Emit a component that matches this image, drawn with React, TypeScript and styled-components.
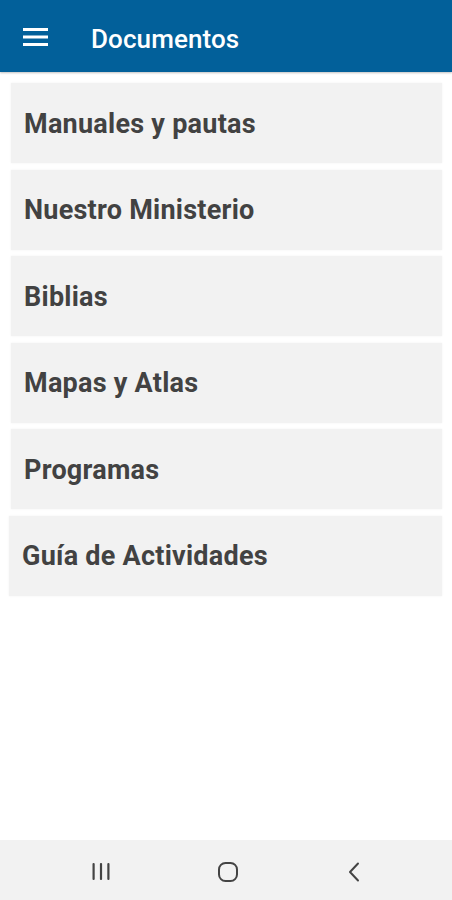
import React from "react";
import styled, { createGlobalStyle } from "styled-components";

const Global = createGlobalStyle`
  html, body { margin: 0; padding: 0; background: #ffffff; }
  body { font-family: Roboto, "Noto Sans", Arial, sans-serif; }
`;

const Screen = styled.div`
  width: 452px;
  height: 900px;
  display: flex;
  flex-direction: column;
  background: #ffffff;
  overflow: hidden;
`;

const AppBar = styled.header`
  height: 72px;
  box-sizing: border-box;
  flex: none;
  background: #02609a;
  display: flex;
  align-items: center;
  padding: 5px 0 0 23px;
  box-shadow: 0 1px 2px rgba(0, 0, 0, 0.25);
  position: relative;
  z-index: 1;
`;

const MenuButton = styled.div`
  width: 25px;
  height: 18px;
  display: flex;
  align-items: center;
  justify-content: center;
  margin-top: -3px;
`;

const Title = styled.h1`
  margin: 0 0 0 43px;
  color: #ffffff;
  font-family: Roboto, sans-serif;
  font-size: 26px;
  font-weight: 500;
  letter-spacing: 0.1px;
`;

const List = styled.main`
  flex: 1;
  display: flex;
  flex-direction: column;
  gap: 6.6px;
  padding: 11px 10px 0 11px;
`;

const Card = styled.div<{ $shift?: number }>`
  height: 80px;
  flex: none;
  background: #f2f2f2;
  display: flex;
  align-items: center;
  padding-left: 13px;
  margin-left: ${(p) => p.$shift ?? 0}px;
  box-shadow: 0 0 2px rgba(0, 0, 0, 0.06);
`;

const CardLabel = styled.span`
  font-family: Roboto, sans-serif;
  font-size: 27px;
  font-weight: 700;
  color: #424242;
  letter-spacing: 0.25px;
  margin-top: 1px;
`;

const NavBar = styled.footer`
  height: 60px;
  flex: none;
  background: #f2f2f2;
  display: grid;
  grid-template-columns: 1fr 1fr 1fr;
  align-items: center;
  justify-items: center;
  padding: 3px 34.75px 0 37.75px;
  box-sizing: border-box;
`;

const items = [
  "Manuales y pautas",
  "Nuestro Ministerio",
  "Biblias",
  "Mapas y Atlas",
  "Programas",
  "Guía de Actividades",
];

export default function App() {
  return (
    <>
      <Global />
      <Screen>
        <AppBar>
          <MenuButton>
            <svg width="25" height="18" viewBox="0 0 25 18">
              <rect x="0" y="0" width="25" height="3" fill="#fff" />
              <rect x="0" y="7.5" width="25" height="3" fill="#fff" />
              <rect x="0" y="15" width="25" height="3" fill="#fff" />
            </svg>
          </MenuButton>
          <Title>Documentos</Title>
        </AppBar>
        <List>
          {items.map((t, i) => (
            <Card key={t} $shift={i === 5 ? -2 : 0}>
              <CardLabel>{t}</CardLabel>
            </Card>
          ))}
        </List>
        <NavBar>
          <svg width="20" height="19" viewBox="0 0 20 19">
            <rect x="1.5" y="1" width="2.2" height="17" rx="1" fill="#444" />
            <rect x="8.9" y="1" width="2.2" height="17" rx="1" fill="#444" />
            <rect x="16.3" y="1" width="2.2" height="17" rx="1" fill="#444" />
          </svg>
          <svg width="22" height="22" viewBox="0 0 22 22">
            <rect x="2" y="2" width="18" height="18" rx="6.5" fill="none" stroke="#444" strokeWidth="2" />
          </svg>
          <svg width="16" height="20" viewBox="0 0 16 20">
            <path d="M12 1.5 L4 10 L12 18.5" fill="none" stroke="#444" strokeWidth="2" strokeLinecap="round" strokeLinejoin="round" />
          </svg>
        </NavBar>
      </Screen>
    </>
  );
}
